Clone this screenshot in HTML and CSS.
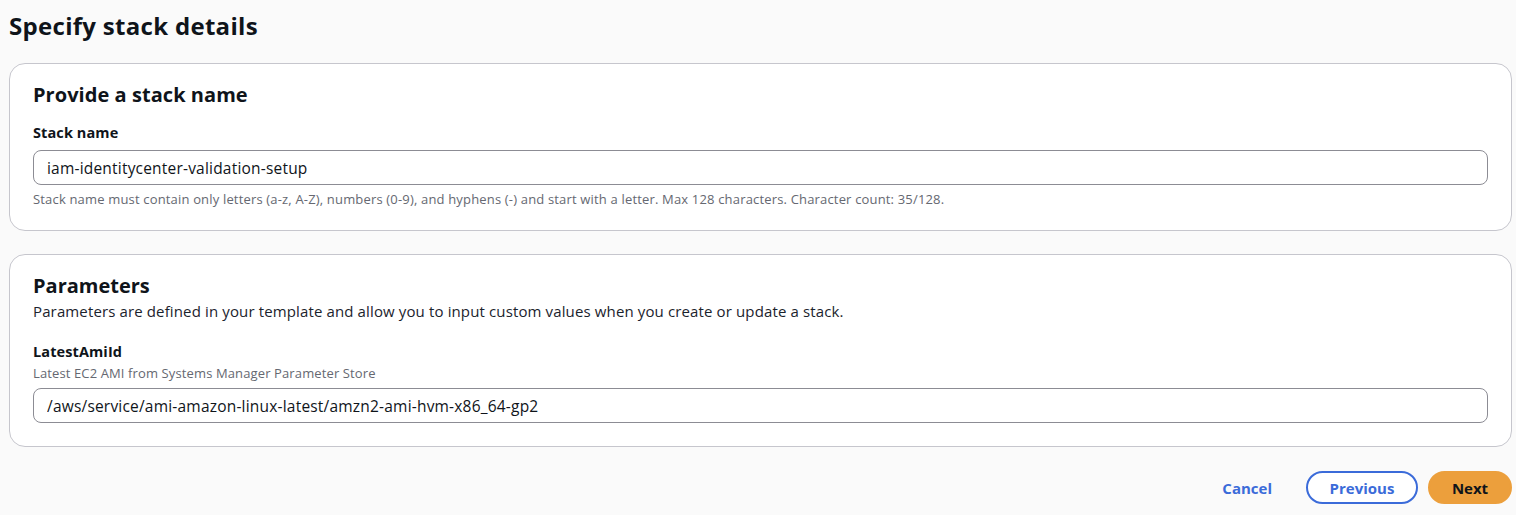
FILE: index.html
```html
<!DOCTYPE html>
<html lang="en">
<head>
<meta charset="utf-8">
<title>Specify stack details</title>
<link rel="stylesheet" href="styles.css">
</head>
<body>
<div class="page">
  <h1 class="title">Specify stack details</h1>

  <section class="card card-name">
    <h2 class="card-heading">Provide a stack name</h2>
    <label class="field-label" for="stackName">Stack name</label>
    <input class="text-input" id="stackName" type="text" value="iam-identitycenter-validation-setup">
    <div class="hint">Stack name must contain only letters (a-z, A-Z), numbers (0-9), and hyphens (-) and start with a letter. Max 128 characters. Character count: 35/128.</div>
  </section>

  <section class="card card-params">
    <h2 class="card-heading card-heading-lg">Parameters</h2>
    <p class="card-desc">Parameters are defined in your template and allow you to input custom values when you create or update a stack.</p>
    <label class="field-label field-label-param" for="latestAmi">LatestAmiId</label>
    <div class="hint hint-desc">Latest EC2 AMI from Systems Manager Parameter Store</div>
    <input class="text-input text-input-param" id="latestAmi" type="text" value="/aws/service/ami-amazon-linux-latest/amzn2-ami-hvm-x86_64-gp2">
  </section>

  <div class="actions">
    <button class="btn btn-link" type="button">Cancel</button>
    <button class="btn btn-normal" type="button">Previous</button>
    <button class="btn btn-primary" type="button">Next</button>
  </div>
</div>
</body>
</html>
```

FILE: styles.css
```css
* { box-sizing: border-box; }

html, body {
  margin: 0;
  padding: 0;
  background: #fafafa;
}

body {
  font-family: "Open Sans", "Noto Sans", Arial, sans-serif;
  color: #0f141a;
  font-size: 15px;
  line-height: 20px;
}

.page {
  padding: 12px 4px 0 9px;
}

.title {
  margin: 0 0 23px 0;
  font-size: 24px;
  line-height: 28px;
  font-weight: 700;
  letter-spacing: 0.3px;
}

.card {
  background: #ffffff;
  border: 1px solid #c6c6cd;
  border-radius: 16px;
  display: flex;
  flex-direction: column;
  align-items: stretch;
}

.card-name {
  padding: 19px 23px 23px 23px;
}

.card-params {
  margin-top: 23px;
  padding: 18px 23px 23px 23px;
}

.card-heading {
  margin: 0;
  font-size: 20px;
  line-height: 24px;
  font-weight: 700;
  letter-spacing: 0.05px;
}

.card-heading-lg {
  line-height: 26px;
  letter-spacing: 0;
}

.card-desc {
  margin: 2px 0 0 0;
  font-size: 15px;
  line-height: 20px;
  letter-spacing: 0.13px;
  color: #1b232d;
}

.field-label {
  display: block;
  margin-top: 16px;
  font-size: 14.5px;
  line-height: 20px;
  font-weight: 700;
  letter-spacing: 0.1px;
}

.field-label-param {
  margin-top: 21px;
}

.text-input {
  display: block;
  width: 100%;
  height: 35px;
  margin-top: 7px;
  padding: 0 13px;
  border: 1px solid #8c8c94;
  border-radius: 8px;
  background: #ffffff;
  font-family: inherit;
  font-size: 15.5px;
  letter-spacing: 0.2px;
  color: #0f141a;
  outline: none;
}

.hint {
  margin-top: 6px;
  font-size: 13px;
  line-height: 16px;
  letter-spacing: 0.17px;
  color: #656871;
}

.hint-desc {
  margin-top: 3px;
  letter-spacing: 0.12px;
}

.actions {
  display: flex;
  justify-content: flex-end;
  align-items: center;
  gap: 10px;
  margin-top: 24px;
}

.btn {
  height: 33px;
  border-radius: 17px;
  font-family: inherit;
  font-size: 15px;
  font-weight: 700;
  line-height: 20px;
  cursor: pointer;
  padding: 0;
}

.btn-link {
  background: transparent;
  border: none;
  color: #3b6bd9;
  padding: 0 17px;
  margin-right: 7px;
}

.btn-normal {
  width: 112px;
  background: #ffffff;
  border: 2px solid #3b6bd9;
  color: #3b6bd9;
}

.btn-primary {
  width: 84px;
  background: #ec9f3c;
  border: 2px solid #ec9f3c;
  color: #0f141a;
}
```
